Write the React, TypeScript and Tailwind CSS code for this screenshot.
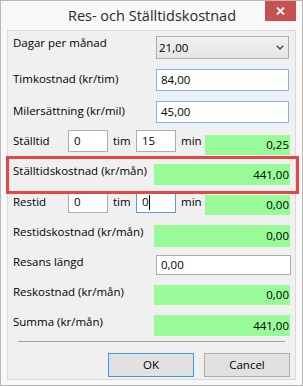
import React from "react";

const font = { fontFamily: '"Open Sans", "Liberation Sans", sans-serif' };

function Label({ text, w, mt = 0, pl = 0 }: { text: string; w: number | string; mt?: number; pl?: number }) {
  return (
    <div className="flex-none leading-[16px]" style={{ width: w, marginTop: mt, paddingLeft: pl }}>
      {text}
    </div>
  );
}

function Green({ value, className }: { value: string; className: string }) {
  return (
    <div className={`flex flex-none items-center justify-end bg-[#98fb98] pr-[1px] ${className}`}>
      {value}
    </div>
  );
}

function Box({ value, className, caret }: { value: string; className: string; caret?: boolean }) {
  return (
    <div className={`flex flex-none items-center bg-white border ${className}`}>
      <span>{value}</span>
      {caret && <span className="ml-[0.5px] h-[15px] w-px bg-black" />}
    </div>
  );
}

export default function App() {
  return (
    <div className="bg-white" style={font}>
      <div className="relative h-[386px] w-[303px] border border-[#b8b8b8] bg-[#f8f8f8] text-[11.5px] text-black">
        {/* title bar */}
        <div className="flex h-[29px] items-center justify-center pl-[1px] text-[14.5px] text-[#2b2b2b]">
          Res- och Ställtidskostnad
        </div>
        <div className="absolute left-[264px] top-0 flex h-[20px] w-[31px] items-center justify-center bg-[#c75050]">
          <svg width="9" height="8" viewBox="0 0 9 8">
            <path d="M1 0.5 L8 7.5 M8 0.5 L1 7.5" stroke="white" strokeWidth="1.8" />
          </svg>
        </div>

        {/* client */}
        <div className="relative ml-[6px] h-[350px] w-[289px] border border-[#d9d9d9] bg-[#f0f0f0] pl-[5px]">
          {/* Dagar per månad */}
          <div className="mt-[4px] flex">
            <Label text="Dagar per månad" w={143} />
            <div className="mt-[1px] flex h-[23px] w-[133px] items-center justify-between border border-[#acacac] bg-gradient-to-b from-[#f0f0f0] to-[#e5e5e5] pl-[2px] pr-[4px]">
              <span>21,00</span>
              <svg width="8" height="5" viewBox="0 0 8 5">
                <path d="M0.8 0.8 L4 4 L7.2 0.8" stroke="#555" strokeWidth="1.6" fill="none" />
              </svg>
            </div>
          </div>

          {/* Timkostnad */}
          <div className="mt-[10px] flex">
            <Label text="Timkostnad (kr/tim)" w={143} mt={2} />
            <Box value="84,00" className="h-[22px] w-[133px] border-[#7eb4ea] pl-[4px]" />
          </div>

          {/* Milersättning */}
          <div className="mt-[10px] flex">
            <Label text="Milersättning (kr/mil)" w={143} mt={2} />
            <Box value="45,00" className="h-[22px] w-[133px] border-[#7eb4ea] pl-[4px]" />
          </div>

          {/* Ställtid */}
          <div className="mt-[7px] flex">
            <Label text="Ställtid" w={55} mt={3} />
            <Box value="0" className="h-[22px] w-[40px] border-[#abadb3] pl-[5px]" />
            <Label text="tim" w={28} mt={3} pl={5} />
            <Box value="15" className="h-[22px] w-[40px] border-[#abadb3] pl-[5px]" />
            <Label text="min" w={29} mt={3} pl={5} />
            <Green value="0,25" className="mt-[5px] h-[20px] w-[85px]" />
          </div>

          {/* Ställtidskostnad */}
          <div className="mt-[8px] flex">
            <Label text="Ställtidskostnad (kr/mån)" w={141} />
            <Green value="441,00" className="mt-[1px] h-[21px] w-[136px]" />
          </div>

          {/* Restid */}
          <div className="mt-[6px] flex">
            <Label text="Restid" w={55} mt={3} />
            <Box value="0" className="h-[22px] w-[40px] border-[#abadb3] pl-[5px]" />
            <Label text="tim" w={28} mt={3} pl={5} />
            <Box value="0" caret className="h-[22px] w-[40px] border-[#569de5] pl-[5px]" />
            <Label text="min" w={29} mt={3} pl={5} />
            <Green value="0,00" className="mt-[4px] h-[20px] w-[85px]" />
          </div>

          {/* Restidskostnad */}
          <div className="mt-[9px] flex">
            <Label text="Restidskostnad (kr/mån)" w={141} />
            <Green value="0,00" className="mt-[1px] h-[22px] w-[136px]" />
          </div>

          {/* Resans längd */}
          <div className="mt-[7px] flex">
            <Label text="Resans längd" w={143} />
            <Box value="0,00" className="mt-[1px] h-[20px] w-[135px] border-[#acacac] pl-[4px]" />
          </div>

          {/* Reskostnad */}
          <div className="mt-[9px] flex">
            <Label text="Reskostnad (kr/mån)" w={141} />
            <Green value="0,00" className="mt-[1px] h-[20px] w-[136px]" />
          </div>

          {/* Summa */}
          <div className="mt-[9px] flex">
            <Label text="Summa (kr/mån)" w={141} />
            <Green value="441,00" className="mt-[1px] h-[21px] w-[136px]" />
          </div>

          <div className="ml-[5px] mt-[5px] h-px w-[267px] bg-[#a0a0a0]" />

          <div className="mt-[11px] flex pl-[95px]">
            <button className="h-[24px] w-[86px] border border-[#3399ff] bg-[#e1e1e1]">OK</button>
            <button className="ml-[10px] h-[24px] w-[86px] border border-[#adadad] bg-[#e1e1e1]">Cancel</button>
          </div>

          {/* highlight */}
          <div className="absolute left-[-2px] top-[125px] h-[38px] w-[293px] border-[3px] border-[#e34848]" />
        </div>
      </div>
    </div>
  );
}
